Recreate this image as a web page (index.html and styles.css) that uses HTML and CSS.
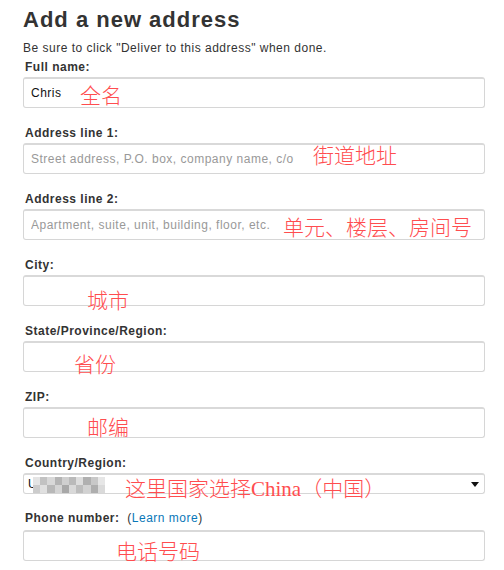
FILE: index.html
```html
<!DOCTYPE html>
<html lang="en">
<head>
    <meta charset="UTF-8">
    <title>Add a new address</title>
    <link rel="stylesheet" href="styles.css">
</head>
<body>

<div class="container">
    <h1>Add a new address</h1>
    <p class="hint">Be sure to click "Deliver to this address" when done.</p>

    <div class="field first">
        <label>Full name:</label>
        <div class="box">
            <input type="text" value="Chris">
            <span class="note" style="left:57px;top:9px">全名</span>
        </div>
    </div>

    <div class="field">
        <label>Address line 1:</label>
        <div class="box">
            <input type="text" placeholder="Street address, P.O. box, company name, c/o">
            <span class="note" style="left:290px;top:3px">街道地址</span>
        </div>
    </div>

    <div class="field">
        <label>Address line 2:</label>
        <div class="box">
            <input type="text" placeholder="Apartment, suite, unit, building, floor, etc.">
            <span class="note" style="left:260px;top:9px">单元、楼层、房间号</span>
        </div>
    </div>

    <div class="field">
        <label>City:</label>
        <div class="box">
            <input type="text">
            <span class="note" style="left:64px;top:16px">城市</span>
        </div>
    </div>

    <div class="field">
        <label>State/Province/Region:</label>
        <div class="box">
            <input type="text">
            <span class="note" style="left:51px;top:14px">省份</span>
        </div>
    </div>

    <div class="field">
        <label>ZIP:</label>
        <div class="box">
            <input type="text">
            <span class="note" style="left:64px;top:11px">邮编</span>
        </div>
    </div>

    <div class="field country">
        <label>Country/Region:</label>
        <div class="box select-box">
            <select>
                <option>U</option>
            </select>
            <span class="blur"></span>
            <span class="note" style="left:102px;top:6px">这里国家选择China（中国）</span>
        </div>
    </div>

    <div class="field phone">
        <label>Phone number: <span class="more">(<a href="#">Learn more</a>)</span></label>
        <div class="box">
            <input type="text">
            <span class="note" style="left:93px;top:12px">电话号码</span>
        </div>
    </div>
</div>

</body>
</html>
```

FILE: styles.css
```css
body {
    margin: 0;
    font-family: "Liberation Sans", Arial, sans-serif;
    color: #333;
    background-color: #fff;
}
.container {
    padding: 8px 19px 0 23px;
}
h1 {
    margin: 0;
    font-size: 22px;
    line-height: 24px;
    font-weight: bold;
    letter-spacing: 1px;
    color: #333;
}
.hint {
    margin: 9px 0 0;
    font-size: 12px;
    line-height: 14px;
    letter-spacing: 0.5px;
}
.field {
    margin-bottom: 18px;
}
.field.first {
    margin-top: 5px;
}
.field label {
    display: block;
    padding-left: 2px;
    margin-bottom: 3px;
    font-size: 12px;
    line-height: 14px;
    font-weight: bold;
    letter-spacing: 0.5px;
    color: #333;
}
.box {
    position: relative;
    width: 462px;
}
.box input {
    display: block;
    box-sizing: border-box;
    width: 100%;
    height: 31px;
    margin: 0;
    padding: 0 7px;
    border: 1px solid #d6d6d6;
    border-top: 2px solid #d9d9d9;
    border-radius: 3px;
    font-family: "Liberation Sans", Arial, sans-serif;
    font-size: 12px;
    letter-spacing: 0.5px;
    color: #111;
    background: #fff;
    outline: none;
}
.box input::placeholder {
    color: #999;
}
.country {
    margin-bottom: 17px;
}
.select-box select {
    display: block;
    box-sizing: border-box;
    width: 100%;
    height: 21px;
    margin: 0;
    padding: 0 4px;
    border: 1px solid #d6d6d6;
    border-top: 2px solid #d9d9d9;
    border-radius: 3px;
    font-family: "Liberation Sans", Arial, sans-serif;
    font-size: 12px;
    color: #111;
    background: #fff;
    appearance: none;
    -webkit-appearance: none;
}
.select-box::after {
    content: "";
    position: absolute;
    right: 6px;
    top: 9px;
    border-left: 4px solid transparent;
    border-right: 4px solid transparent;
    border-top: 5px solid #111;
}
.blur {
    position: absolute;
    left: 10px;
    top: 4px;
    width: 72px;
    height: 16px;
    background:
        linear-gradient(90deg, #e4e4e4 0 10%, #c2c2c2 10% 20%, #d8d8d8 20% 30%, #b4b4b4 30% 40%, #cfcfcf 40% 50%, #bababa 50% 60%, #dddddd 60% 70%, #b0b0b0 70% 80%, #c8c8c8 80% 90%, #e6e6e6 90% 100%) top / 100% 50% no-repeat,
        linear-gradient(90deg, #cccccc 0 10%, #e0e0e0 10% 20%, #b8b8b8 20% 30%, #d4d4d4 30% 40%, #a8a8a8 40% 50%, #d9d9d9 50% 60%, #bdbdbd 60% 70%, #d2d2d2 70% 80%, #aeaeae 80% 90%, #dadada 90% 100%) bottom / 100% 50% no-repeat;
}
.phone label {
    margin-bottom: 5px;
}
.more {
    margin-left: 4px;
    font-weight: normal;
    color: #333;
}
.more a {
    color: #0a78b8;
    text-decoration: none;
}
.note {
    position: absolute;
    font-family: "Liberation Serif", "Noto Sans CJK SC", serif;
    font-size: 21px;
    line-height: 20px;
    font-weight: 300;
    color: #ff4d4f;
    white-space: nowrap;
}
```
